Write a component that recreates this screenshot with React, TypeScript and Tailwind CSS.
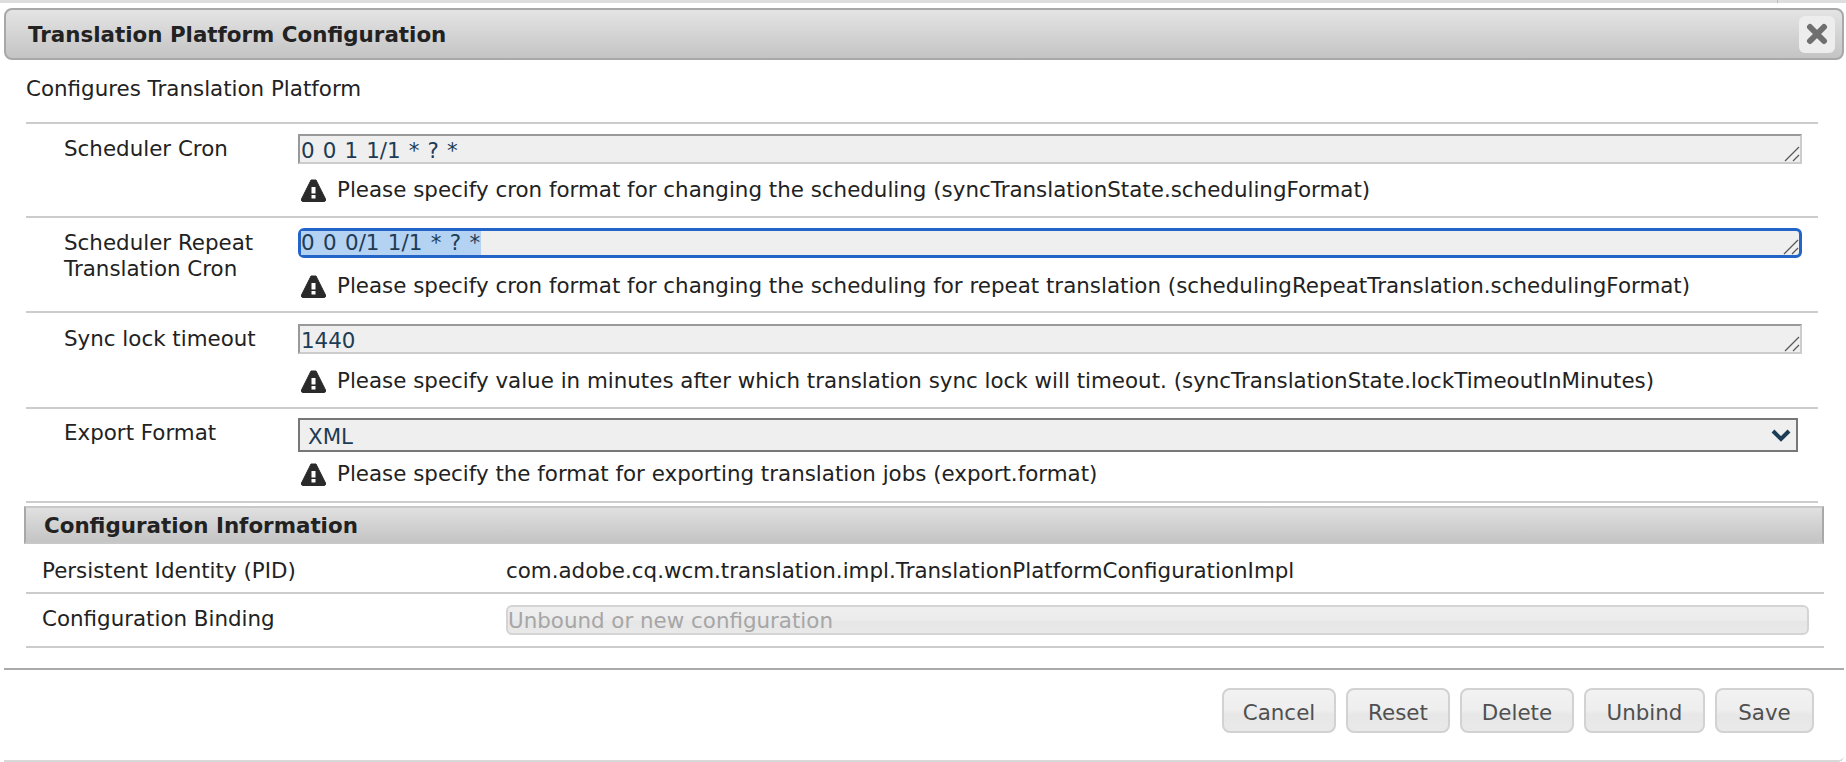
const fields = [
  {
    label: ["Scheduler Cron"],
    value: "0 0 1 1/1 * ? *",
    rowClass: "h-[94px] pt-[10px]",
    hintClass: "mt-[14px]",
    hint: "Please specify cron format for changing the scheduling (syncTranslationState.schedulingFormat)",
  },
  {
    label: ["Scheduler Repeat", "Translation Cron"],
    value: "0 0 0/1 1/1 * ? *",
    focused: true,
    rowClass: "h-[95px] pt-[10px]",
    hintClass: "mt-[16px]",
    hint: "Please specify cron format for changing the scheduling for repeat translation (schedulingRepeatTranslation.schedulingFormat)",
  },
  {
    label: ["Sync lock timeout"],
    value: "1440",
    rowClass: "h-[96px] pt-[11px]",
    hintClass: "mt-[15px]",
    hint: "Please specify value in minutes after which translation sync lock will timeout. (syncTranslationState.lockTimeoutInMinutes)",
  },
]

function Grip() {
  return (
    <svg width="16" height="16" viewBox="0 0 16 16" className="shrink-0 self-end">
      <path d="M1 15 L15 1 M9 15 L15 9" stroke="#555" strokeWidth="1.2" fill="none" />
    </svg>
  )
}

function WarningIcon() {
  return (
    <svg width="25" height="23" viewBox="0 0 25 23" className="shrink-0">
      <path
        d="M10 1 H15 L24.5 20 Q25 22.5 23 22.5 H2 Q0 22.5 0.5 20 Z"
        fill="#2a2a2a"
        stroke="#2a2a2a"
        strokeLinejoin="round"
      />
      <rect x="10.5" y="8" width="4" height="6.5" fill="#ffffff" />
      <rect x="10.5" y="16" width="4" height="3.5" fill="#ffffff" />
    </svg>
  )
}

function Hint({ text }: { text: string }) {
  return (
    <div className="flex items-center h-[24px] pl-[3px]">
      <WarningIcon />
      <span className="ml-[11px] whitespace-nowrap">{text}</span>
    </div>
  )
}

function FieldRow({ field }: { field: (typeof fields)[number] }) {
  return (
    <div className={`flex border-t-2 border-[#cccccc] pl-[38px] pr-[16px] ${field.rowClass}`}>
      <div className="w-[234px] shrink-0 leading-[26px] pt-[2px]">
        {field.label.map((line) => (
          <div key={line}>{line}</div>
        ))}
      </div>
      <div className="flex-1">
        <div
          className={
            field.focused
              ? "flex justify-between h-[30px] bg-[#efefef] border-[3px] border-[#2264c8] rounded-[6px] text-[#1d3c55] leading-[24px] [word-spacing:1.6px]"
              : "flex justify-between h-[30px] bg-[#efefef] border-2 border-[#cccccc] border-t-[#999999] border-l-[#999999] text-[#1d3c55] leading-[29px] pl-px [word-spacing:1.3px]"
          }
        >
          {field.focused ? <span className="bg-[#b4d2f2] pr-px">{field.value}</span> : <span>{field.value}</span>}
          <Grip />
        </div>
        <div className={field.hintClass}>
          <Hint text={field.hint} />
        </div>
      </div>
    </div>
  )
}

function FooterButton({ label, width }: { label: string; width: string }) {
  return (
    <button
      className={`${width} h-[45px] pt-[5px] rounded-[8px] border-2 border-[#d2d2d2] bg-[linear-gradient(#f2f2f2_0%,#eeeeee_50%,#e7e7e7_60%,#e9e9e9_100%)] text-[#505050]`}
    >
      {label}
    </button>
  )
}

export default function App() {
  return (
    <div className="w-[1846px] h-[762px] overflow-hidden bg-white text-[#222222] text-[21.4px] font-['DejaVu_Sans',sans-serif]">
      {/* Page edge behind the dialog */}
      <div className="h-[8px]">
        <div className="h-[3px] bg-[#dedede] flex justify-end pr-[68px]">
          <div className="w-px bg-[#bbbbbb]" />
        </div>
      </div>

      {/* Title bar */}
      <div className="ml-[4px] w-[1840px] h-[52px] flex items-center justify-between rounded-[8px] border-2 border-[#a8a8a8] bg-gradient-to-b from-[#e4e4e4] to-[#c4c4c4] pl-[22px] pr-[7px]">
        <span className="font-bold text-[#222222] pt-[2px]">Translation Platform Configuration</span>
        <div className="w-[36px] h-[37px] rounded-[6px] bg-[#ededed] flex items-center justify-center">
          <svg width="22" height="22" viewBox="0 0 22 22">
            <path d="M4 4 L18 18 M18 4 L4 18" stroke="#6f6f6f" strokeWidth="6" strokeLinecap="round" />
          </svg>
        </div>
      </div>

      <div className="pl-[26px] leading-[26px] mt-[16px] h-[46px]">Configures Translation Platform</div>

      {/* Form rows */}
      <div className="ml-[26px] w-[1792px]">
        {fields.map((field) => (
          <FieldRow key={field.value} field={field} />
        ))}
        <div className="flex border-t-2 border-[#cccccc] h-[94px] pl-[38px] pr-[20px] pt-[9px]">
          <div className="w-[234px] shrink-0 leading-[26px] pt-[2px]">Export Format</div>
          <div className="flex-1">
            <div className="flex items-center justify-between h-[34px] bg-[#efefef] border-2 border-[#777777] pl-[8px] pr-[5px] text-[#1d3c55]">
              <span className="pt-[5px]">XML</span>
              <svg width="20" height="14" viewBox="0 0 20 14">
                <path d="M2 3 L10 11 L18 3" stroke="#1d3c55" strokeWidth="4" fill="none" />
              </svg>
            </div>
            <div className="mt-[10px]">
              <Hint text="Please specify the format for exporting translation jobs (export.format)" />
            </div>
          </div>
        </div>
        <div className="border-t-2 border-[#cccccc]" />
      </div>

      {/* Configuration Information */}
      <div className="ml-[24px] w-[1800px] h-[38px] mt-[3px] flex items-center pl-[18px] pt-[3px] bg-gradient-to-b from-[#e0e0e0] to-[#c4c4c4] border-2 border-y-[#c8c8c8] border-x-[#a8a8a8] font-bold">
        Configuration Information
      </div>
      <div className="ml-[26px] w-[1798px]">
        <div className="flex items-center h-[50px] pl-[16px] pt-[6px] border-b-2 border-[#cccccc]">
          <div className="w-[464px] shrink-0">Persistent Identity (PID)</div>
          <div>com.adobe.cq.wcm.translation.impl.TranslationPlatformConfigurationImpl</div>
        </div>
        <div className="flex items-center h-[54px] pl-[16px] pr-[15px] border-b-2 border-[#cccccc]">
          <div className="w-[464px] shrink-0 pb-[2px]">Configuration Binding</div>
          <div className="flex-1 h-[30px] rounded-[6px] border-2 border-[#d4d4d4] bg-[linear-gradient(#eeeeee_0%,#ececec_50%,#e6e6e6_55%,#e9e9e9_100%)] text-[#a6a6a6] leading-[27px]">
            Unbound or new configuration
          </div>
        </div>
      </div>

      {/* Footer */}
      <div className="mt-[20px] ml-[4px] w-[1840px] border-t-2 border-[#aaaaaa] h-[94px] flex justify-end gap-[10px] pt-[18px] pr-[30px] border-b-2 border-b-[#d8d8d8] rounded-br-[6px]">
        <FooterButton label="Cancel" width="w-[114px]" />
        <FooterButton label="Reset" width="w-[104px]" />
        <FooterButton label="Delete" width="w-[114px]" />
        <FooterButton label="Unbind" width="w-[121px]" />
        <FooterButton label="Save" width="w-[99px]" />
      </div>
    </div>
  )
}
